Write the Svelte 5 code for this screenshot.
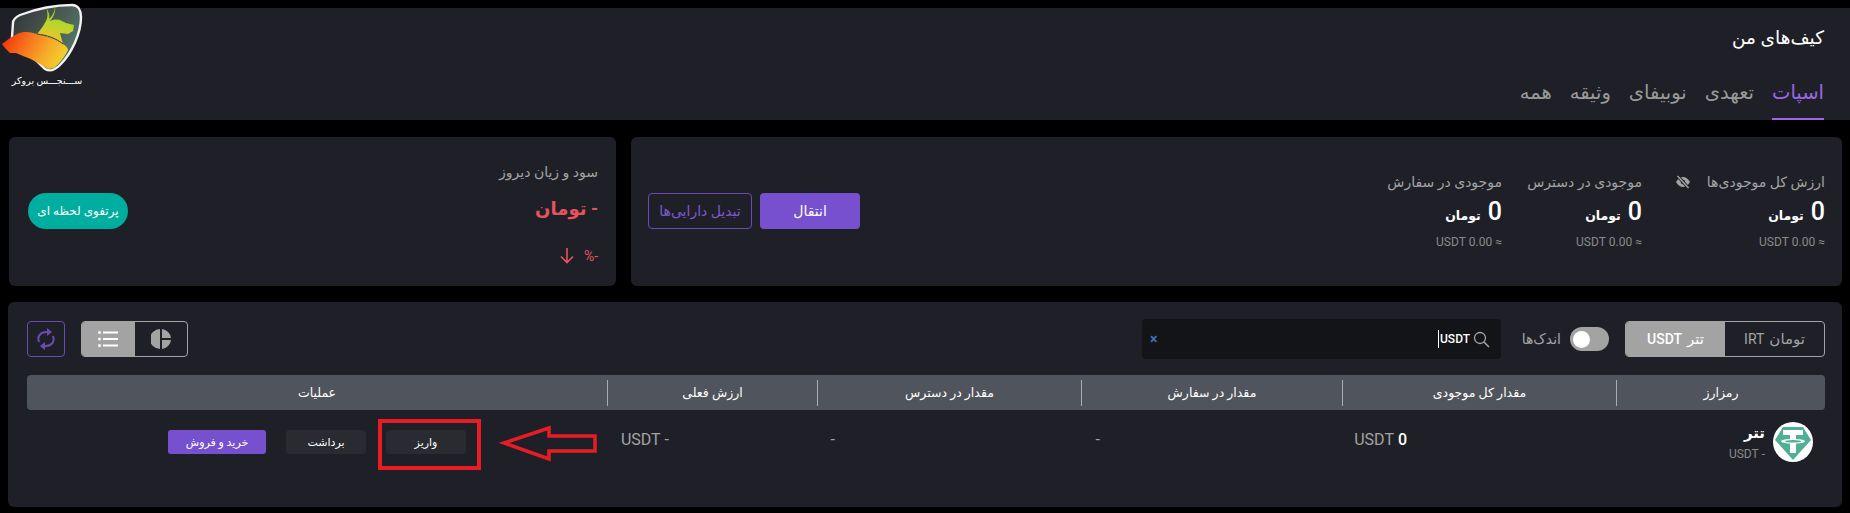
<script lang="ts">
	const tabs = ['اسپات', 'تعهدی', 'نوبیفای', 'وثیقه', 'همه'];
	const stats = [
		{ label: 'ارزش کل موجودی‌ها', eye: true, width: 183 },
		{ label: 'موجودی در دسترس', eye: false, width: 140 },
		{ label: 'موجودی در سفارش', eye: false, width: 140 }
	];
	const headers = ['رمزارز', 'مقدار کل موجودی', 'مقدار در سفارش', 'مقدار در دسترس', 'ارزش فعلی', 'عملیات'];
</script>

<div class="page" dir="rtl">
	<header class="top">
		<h1>کیف‌های من</h1>
		<nav class="tabs">
			{#each tabs as tab, i}
				<span class="tab" class:active={i === 0}>{tab}</span>
			{/each}
		</nav>
		<div class="logo">
			<svg width="84" height="72" viewBox="0 0 84 72">
				<defs>
					<linearGradient id="bullGrad" x1="0.7" y1="0" x2="0.5" y2="1">
						<stop offset="0" stop-color="#6fc62a" />
						<stop offset="0.5" stop-color="#b9d62c" />
						<stop offset="1" stop-color="#f0c22c" />
					</linearGradient>
					<linearGradient id="bearGrad" x1="0" y1="0.2" x2="1" y2="0.5">
						<stop offset="0" stop-color="#ee3208" />
						<stop offset="0.35" stop-color="#f7701c" />
						<stop offset="0.7" stop-color="#f7a928" />
						<stop offset="1" stop-color="#f2d22e" />
					</linearGradient>
					<linearGradient id="shieldGrad" x1="0" y1="0" x2="1" y2="0.6">
						<stop offset="0" stop-color="#2f3235" />
						<stop offset="0.5" stop-color="#47544f" />
						<stop offset="1" stop-color="#55796a" />
					</linearGradient>
				</defs>
				<path
					d="M13 22C13 18 16 16 20 14C36 8 56 4 72 4C78 4 81 9 81 16C81 32 72 52 60 64C55 69 50 71 45 68L12 36Z"
					fill="url(#shieldGrad)"
					stroke="#f2f2f2"
					stroke-width="2.400"
				/>
				<path
					d="M55 4C56 10 54 16 50 20C52 19 56 18 60 19L66 22L74 24L73 30L68 33L60 32L63 43C55 38 46 35 37 33C41 28 44 24 46 20C48 16 48 12 46 7C49 11 50 14 49 18C53 14 55 10 55 4Z"
					fill="url(#bullGrad)"
				/>
				<path
					d="M2 43L10 37L17 33C24 30 30 31 37 33C48 36 58 39 63 43C66 45 68 47 68 49C65 55 60 62 54 67L48 68C40 63 32 58 23 55L16 52L10 52L5 47Z"
					fill="url(#bearGrad)"
				/>
				<path d="M37 33C46 34 56 37 63 43" fill="none" stroke="#33402c" stroke-width="1" />
			</svg>
			<span class="brand">ســـنجـــس بروکر</span>
		</div>
	</header>

	<section class="cards">
		<div class="card balance">
			<div class="stats">
				{#each stats as stat}
					<div class="stat" style="width: {stat.width}px">
						<div class="stat-label">
							<span>{stat.label}</span>
							{#if stat.eye}
								<svg width="16" height="14" viewBox="0 0 16 14">
									<path d="M1 7C3 3.500 5.500 2 8 2s5 1.500 7 5c-2 3.500-4.500 5-7 5S3 10.500 1 7Z" fill="#a3a3a3" />
									<circle cx="8" cy="7" r="2.200" fill="#1f2027" />
									<path d="M2.500 1l11 12" stroke="#1f2027" stroke-width="3.200" />
									<path d="M2.500 1l11 12" stroke="#a3a3a3" stroke-width="1.400" />
								</svg>
							{/if}
						</div>
						<div class="stat-value"><b>0</b><span>تومان</span></div>
						<div class="stat-usdt">≈ 0.00 USDT</div>
					</div>
				{/each}
			</div>
			<div class="actions">
				<button class="btn-primary">انتقال</button>
				<button class="btn-outline">تبدیل دارایی‌ها</button>
			</div>
		</div>

		<div class="card pnl">
			<div class="pnl-info">
				<div class="pnl-label">سود و زیان دیروز</div>
				<div class="pnl-value">- تومان</div>
				<div class="pnl-percent">
					<span>-%</span>
					<svg width="16" height="17" viewBox="0 0 16 17">
						<path d="M8 1v14M2 9.500L8 15.500l6-6" fill="none" stroke="#e8525f" stroke-width="1.600" />
					</svg>
				</div>
			</div>
			<button class="btn-pill">پرتفوی لحظه ای</button>
		</div>
	</section>

	<section class="assets">
		<div class="toolbar">
			<div class="seg currency">
				<span class="seg-item"><em>تومان</em> IRT</span>
				<span class="seg-item on"><em>تتر</em> USDT</span>
			</div>
			<div class="switch-wrap">
				<span class="switch"><i></i></span>
				<span class="switch-label">اندک‌ها</span>
			</div>
			<div class="search">
				<svg width="17" height="17" viewBox="0 0 17 17">
					<circle cx="7" cy="7" r="5.500" fill="none" stroke="#a3a3a3" stroke-width="1.300" />
					<path d="M11 11l5 5" stroke="#a3a3a3" stroke-width="1.500" />
				</svg>
				<span class="query">USDT</span>
				<span class="clear">×</span>
			</div>
			<div class="seg view">
				<span class="seg-item">
					<svg width="20" height="20" viewBox="0 0 20 20">
						<path d="M9 0a10 10 0 0 0 0 20Z" fill="#a3a3a3" />
						<path d="M11 0a10 10 0 0 1 9 9h-9ZM11 11h9a10 10 0 0 1-9 9Z" fill="#a3a3a3" />
					</svg>
				</span>
				<span class="seg-item on">
					<svg width="20" height="18" viewBox="0 0 20 18">
						<g fill="#fff">
							<circle cx="1.500" cy="2.500" r="1.500" />
							<circle cx="1.500" cy="9" r="1.500" />
							<circle cx="1.500" cy="15.500" r="1.500" />
							<rect x="5" y="1.500" width="15" height="2" />
							<rect x="5" y="8" width="15" height="2" />
							<rect x="5" y="14.500" width="15" height="2" />
						</g>
					</svg>
				</span>
			</div>
			<button class="refresh" aria-label="refresh">
				<svg width="18" height="24" viewBox="0 0 18 24">
					<g fill="none" stroke="#6a4bb5" stroke-width="2">
						<path d="M2 15C0 10 3 5 9 5h2" />
						<path d="M16 9c2 5-1 10-7 10H7" />
					</g>
					<path d="M10 1l5 4-5 4ZM8 15l-5 4 5 4Z" fill="#6a4bb5" />
				</svg>
			</button>
		</div>

		<div class="thead">
			{#each headers as title}
				<div class="th">{title}</div>
			{/each}
		</div>

		<div class="row">
			<div class="coin">
				<svg width="40" height="40" viewBox="0 0 40 40">
					<circle cx="20" cy="20" r="20" fill="#fff" />
					<path d="M10 5h20l8 13-18 20L2 18Z" fill="#50af95" />
					<path d="M10 8h20v5h-7v4c5 .3 9 1.200 9 2.300S28 21.300 23 21.600V31h-6v-9.400C12 21.300 8 20.400 8 19.300S12 17.300 17 17v-4h-7Z" fill="#fff" />
					<ellipse cx="20" cy="19.300" rx="8.500" ry="1.300" fill="#50af95" />
				</svg>
				<div class="coin-text">
					<b>تتر</b>
					<span>- USDT</span>
				</div>
			</div>
			<div class="cell"><b>0</b> USDT</div>
			<div class="cell">-</div>
			<div class="cell">-</div>
			<div class="cell">- USDT</div>
			<div class="row-actions">
				<span class="deposit">
					<button class="btn-dark">واریز</button>
				</span>
				<button class="btn-dark">برداشت</button>
				<button class="btn-trade">خرید و فروش</button>
			</div>
		</div>

		<!-- annotation arrow drawn over the screenshot -->
		<svg class="arrow" width="100" height="40" viewBox="0 0 100 40">
			<path d="M5 19L50 4V12H96V27H50V35Z" fill="none" stroke="#e81c24" stroke-width="3.500" />
		</svg>
	</section>
</div>

<style>
	:global(body) {
		background: #000;
		font-family: 'Roboto', 'DejaVu Sans', sans-serif;
	}

	.page {
		width: 1850px;
		height: 513px;
		padding-top: 8px;
		box-sizing: border-box;
		overflow: hidden;
		color: #fff;
	}

	button {
		font-family: inherit;
		border: 0;
		cursor: pointer;
		color: #fff;
	}

	em {
		font-style: normal;
	}

	.top {
		position: relative;
		height: 112px;
		box-sizing: border-box;
		background: #1f2027;
		padding: 20px 26px 0 0;
	}

	.top h1 {
		margin: 0;
		font-size: 18.500px;
		line-height: 20px;
		font-weight: 400;
	}

	.tabs {
		display: flex;
		gap: 18px;
		margin-top: 23px;
	}

	.tab {
		font-size: 19.500px;
		height: 49px;
		line-height: 44px;
		box-sizing: border-box;
		color: #9a9a9a;
	}

	.tab.active {
		color: #9a67e6;
		border-bottom: 2px solid #9a67e6;
	}

	.logo {
		position: absolute;
		left: 0;
		top: -7px;
		width: 84px;
		display: flex;
		flex-direction: column;
		align-items: center;
	}

	.brand {
		font-size: 9.500px;
		line-height: 12px;
		margin-top: 2px;
		padding-left: 10px;
		white-space: nowrap;
	}

	.cards {
		display: flex;
		gap: 15px;
		padding: 17px 8px 0;
	}

	.card {
		background: #1f2027;
		border-radius: 6px;
		height: 149px;
		box-sizing: border-box;
	}

	.balance {
		width: 1211px;
		display: flex;
		justify-content: space-between;
		padding: 0 17px;
	}

	.stats {
		display: flex;
		padding-top: 36px;
	}

	.stat-label {
		display: flex;
		align-items: center;
		gap: 16px;
		font-size: 14px;
		line-height: 18px;
		color: #a3a3a3;
		white-space: nowrap;
	}

	.stat-value {
		display: flex;
		align-items: baseline;
		gap: 7px;
		margin-top: 7px;
		line-height: 28px;
	}

	.stat-value b {
		font-size: 25px;
		font-weight: 500;
	}

	.stat-value span {
		font-size: 12.500px;
		font-weight: 700;
	}

	.stat-usdt {
		font-size: 12px;
		line-height: 16px;
		margin-top: 4px;
		color: #8a8a8a;
	}

	.actions {
		display: flex;
		gap: 8px;
		padding-top: 56px;
		height: 36px;
	}

	.btn-primary {
		width: 100px;
		height: 36px;
		background: #7750cf;
		border-radius: 4px;
		font-size: 14px;
	}

	.btn-outline {
		width: 104px;
		height: 36px;
		background: transparent;
		border: 1px solid #6a4bb5;
		border-radius: 4px;
		color: #7d58d0;
		font-size: 14px;
		padding: 0;
	}

	.pnl {
		order: 2;
		width: 607px;
		display: flex;
		justify-content: space-between;
		padding: 0 18px 0 19px;
	}

	.pnl-label {
		font-size: 14px;
		line-height: 18px;
		margin-top: 26px;
		color: #a3a3a3;
	}

	.pnl-value {
		font-size: 18px;
		line-height: 26px;
		margin-top: 15px;
		font-weight: 700;
		color: #e8525f;
	}

	.pnl-percent {
		display: flex;
		align-items: center;
		gap: 9px;
		margin-top: 25px;
		font-size: 14px;
		color: #e8525f;
	}

	.btn-pill {
		width: 100px;
		height: 36px;
		margin-top: 56px;
		padding: 0;
		background: #00ae9f;
		border-radius: 18px;
		font-size: 12px;
	}

	.assets {
		position: relative;
		margin: 16px 8px 0;
		height: 205px;
		box-sizing: border-box;
		background: #1f2027;
		border-radius: 6px;
		padding: 17px 17px 0 19px;
	}

	.toolbar {
		display: flex;
		align-items: center;
		height: 40px;
	}

	.seg {
		display: flex;
		height: 36px;
		box-sizing: border-box;
		border: 1px solid #a3a3a3;
		border-radius: 4px;
		overflow: hidden;
	}

	.seg-item {
		display: flex;
		align-items: center;
		justify-content: center;
		color: #a3a3a3;
	}

	.seg-item.on {
		background: #a3a3a3;
		color: #fff;
	}

	.currency {
		width: 200px;
	}

	.currency .seg-item {
		width: 100px;
		font-size: 14px;
		gap: 5px;
	}

	.currency em {
		font-size: 15px;
	}

	.currency .seg-item.on {
		font-weight: 500;
	}

	.switch-wrap {
		display: flex;
		align-items: center;
		gap: 9px;
		margin-right: 16px;
		width: 100px;
	}

	.switch {
		display: flex;
		align-items: center;
		width: 39px;
		height: 24px;
		border-radius: 12px;
		background: #a3a3a3;
		justify-content: flex-end;
		padding: 0 3px;
		box-sizing: border-box;
	}

	.switch i {
		display: block;
		width: 17px;
		height: 17px;
		border-radius: 50%;
		background: #fff;
	}

	.switch-label {
		font-size: 14px;
		color: #a3a3a3;
	}

	.search {
		display: flex;
		align-items: center;
		width: 359px;
		height: 40px;
		box-sizing: border-box;
		background: #131418;
		border-radius: 4px;
		padding: 0 11px 0 8px;
		margin-right: 8px;
	}

	.query {
		margin-right: 3px;
		padding-left: 1px;
		border-left: 1px solid #fff;
		font-size: 12px;
		line-height: 18px;
		font-weight: 500;
		direction: ltr;
	}

	.clear {
		margin-right: auto;
		color: #3f6fb5;
		font-size: 14px;
		font-weight: 700;
	}

	.view {
		margin-right: auto;
		width: 107px;
	}

	.view .seg-item {
		flex: 1;
	}

	.refresh {
		width: 38px;
		height: 36px;
		margin-right: 16px;
		padding: 0;
		background: transparent;
		border: 1px solid #6a4bb5;
		border-radius: 4px;
		display: flex;
		align-items: center;
		justify-content: center;
	}

	.thead {
		display: grid;
		grid-template-columns: 209px 274px 261px 264px 210px 580px;
		align-items: center;
		height: 35px;
		margin-top: 16px;
		background: #50545c;
		border-radius: 4px;
	}

	.th {
		height: 26px;
		line-height: 26px;
		text-align: center;
		font-size: 12.500px;
		border-left: 1px solid #a8abb0;
	}

	.th:last-child {
		border-left: 0;
	}

	.row {
		display: grid;
		grid-template-columns: 418px 307px 265px 166px 62px 580px;
		align-items: center;
		padding-top: 12px;
	}

	.coin {
		display: flex;
		align-items: center;
		gap: 8px;
		padding-right: 12px;
	}

	.coin-text {
		display: flex;
		flex-direction: column;
		gap: 3px;
	}

	.coin-text b {
		font-size: 15px;
		line-height: 20px;
	}

	.coin-text span {
		font-size: 12px;
		line-height: 16px;
		color: #8a8a8a;
	}

	.cell {
		font-size: 16px;
		color: #a3a3a3;
		padding-bottom: 6px;
	}

	.cell b {
		font-weight: 500;
		color: #fff;
	}

	.row-actions {
		display: flex;
		align-items: center;
		gap: 20px;
		margin-right: 141px;
	}

	.deposit {
		position: relative;
		display: flex;
	}

	/* red annotation box around the deposit button */
	.deposit::after {
		content: '';
		position: absolute;
		left: -8px;
		right: -15px;
		top: -11px;
		bottom: -16px;
		border: 4px solid #e81c24;
	}

	.btn-dark {
		width: 80px;
		height: 24px;
		padding: 0;
		background: #292b31;
		border-radius: 4px;
		font-size: 11px;
	}

	.btn-trade {
		width: 98px;
		height: 24px;
		padding: 0;
		background: #7750cf;
		border-radius: 3px;
		font-size: 11px;
	}

	.arrow {
		position: absolute;
		left: 491px;
		top: 122px;
	}
</style>
